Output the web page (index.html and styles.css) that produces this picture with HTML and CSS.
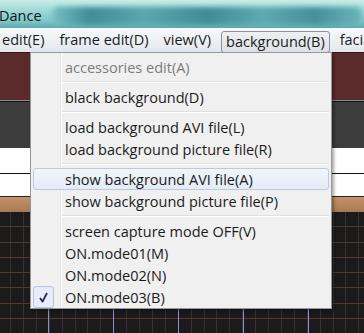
FILE: index.html
```html
<!DOCTYPE html>
<html lang="en">
<head>
    <meta charset="UTF-8">
    <title>Dance</title>
    <link rel="stylesheet" href="styles.css">
</head>
<body>
    <div class="window">
        <div class="titlebar">
            <span class="title">Dance</span>
            <div class="title-blur"></div>
        </div>

        <div class="menubar">
            <span class="menu-item">edit(E)</span>
            <span class="menu-item">frame edit(D)</span>
            <span class="menu-item">view(V)</span>
            <span class="menu-item active">background(B)</span>
            <span class="menu-item">facial(F)</span>
        </div>

        <div class="workspace">
            <div class="band band-red"></div>
            <div class="band band-gray"></div>
            <div class="band band-white"></div>
            <div class="band band-white2"></div>
            <div class="band band-tan"></div>
            <div class="band timeline"></div>
        </div>

        <!-- background(B) dropdown -->
        <ul class="dropdown">
            <li class="item disabled">accessories edit(A)</li>
            <li class="sep"></li>
            <li class="item">black background(D)</li>
            <li class="sep"></li>
            <li class="item">load background AVI file(L)</li>
            <li class="item">load background picture file(R)</li>
            <li class="sep"></li>
            <li class="item hover">show background AVI file(A)</li>
            <li class="item">show background picture file(P)</li>
            <li class="sep"></li>
            <li class="item">screen capture mode OFF(V)</li>
            <li class="item">ON.mode01(M)</li>
            <li class="item">ON.mode02(N)</li>
            <li class="item checked">
                <span class="check">
                    <svg width="9" height="11" viewBox="0 0 9 11">
                        <path d="M1 6 L3.6 9.6 L8 1" fill="none" stroke="#1d2b6b" stroke-width="1.8" stroke-linejoin="round"/>
                    </svg>
                </span>
                ON.mode03(B)
            </li>
        </ul>
    </div>
</body>
</html>
```

FILE: styles.css
```css
html, body {
    margin: 0;
    padding: 0;
}
body {
    width: 364px;
    height: 333px;
    overflow: hidden;
    font-family: "Open Sans", "Noto Sans", sans-serif;
    font-size: 14.5px;
    color: #1b1b1b;
}
.window {
    position: relative;
    height: 333px;
}

/* title bar */
.titlebar {
    display: flex;
    align-items: center;
    height: 28px;
    padding-top: 3px;
    box-sizing: border-box;
    background: linear-gradient(180deg, #c8ece9 0%, #a2dad8 35%, #7ec7c8 75%, #5ea9ae 100%);
    overflow: hidden;
}
.title {
    margin-left: -1px;
    font-size: 14.5px;
    color: #101818;
}
.title-blur {
    flex: 1;
    height: 18px;
    margin: 0 2px 0 10px;
    border-radius: 6px;
    background: linear-gradient(90deg, #78c0c3, #3f8e96 12%, #5aa7ac 30%, #3f8c95 50%, #5eaab0 68%, #458f98 85%, #6bb6ba);
    filter: blur(2.5px);
}

/* menu bar */
.menubar {
    display: flex;
    align-items: center;
    gap: 5px;
    height: 24px;
    margin-left: -3px;
    background: linear-gradient(180deg, #f7f9fb, #e3e8ee);
    white-space: nowrap;
    overflow: hidden;
}
.menu-item {
    padding: 0 4px;
    height: 20px;
    line-height: 19px;
    border: 1px solid transparent;
    border-radius: 3px;
}
.menu-item.active {
    margin-top: 3px;
    border-color: #8e9296;
    background: linear-gradient(180deg, #eef0f2, #dfe2e6);
}

/* background of the editor */
.workspace {
    display: flex;
    flex-direction: column;
}
.band-red {
    height: 47px;
    background: #5b2b2b;
    border-top: 1px solid #2c1c1c;
    border-bottom: 1px solid #8a8a8a;
}
.band-gray {
    height: 46px;
    background: #3c3c3c;
    border-top: 1px solid #111;
}
.band-white {
    height: 25px;
    background: #fff;
    border-bottom: 1px solid #111;
}
.band-white2 {
    height: 22px;
    background: #fff;
    border-bottom: 1px solid #222;
}
.band-tan {
    height: 15px;
    background: linear-gradient(180deg, #c39469, #a97a52);
}
.timeline {
    height: 121px;
    background-color: #1b1b1b;
    background-image:
        repeating-linear-gradient(90deg, transparent 0, transparent 48px, #8c92d0 48px, #8c92d0 49px, transparent 49px, transparent 65px),
        repeating-linear-gradient(180deg, transparent 0, transparent 14.3px, #55392a 14.3px, #55392a 15.3px),
        repeating-linear-gradient(90deg, transparent 0, transparent 10px, #333 10px, #333 11px, transparent 11px, transparent 12.9px);
}

/* dropdown menu */
.dropdown {
    position: absolute;
    left: 30px;
    top: 52px;
    width: 296px;
    margin: 0;
    padding: 3px 2px 0;
    list-style: none;
    border: 1px solid #979797;
    background: linear-gradient(90deg, transparent 29px, #e2e3e3 29px, #e2e3e3 30px, #fff 30px, #fff 31px, transparent 31px), #f0f0f0;
    box-shadow: 2px 2px 3px rgba(0, 0, 0, 0.35);
}
.item {
    position: relative;
    display: flex;
    align-items: center;
    height: 22px;
    padding-left: 32px;
    border-radius: 3px;
    white-space: nowrap;
}
.item.disabled {
    color: #7d7d7d;
}
.item.hover {
    height: 20px;
    border: 1px solid #b9cbe0;
    padding-left: 31px;
    background: linear-gradient(180deg, #f1f5fa, #e3ebf6);
}
.sep {
    height: 1px;
    margin: 3px 0 3px 29px;
    background: #e0e0e0;
    border-bottom: 1px solid #fff;
}
.check {
    position: absolute;
    left: 0;
    top: 0;
    width: 19px;
    height: 20px;
    display: flex;
    align-items: center;
    justify-content: center;
    border: 1px solid #b3c4de;
    border-radius: 3px;
    background: #e6edf8;
}
```
